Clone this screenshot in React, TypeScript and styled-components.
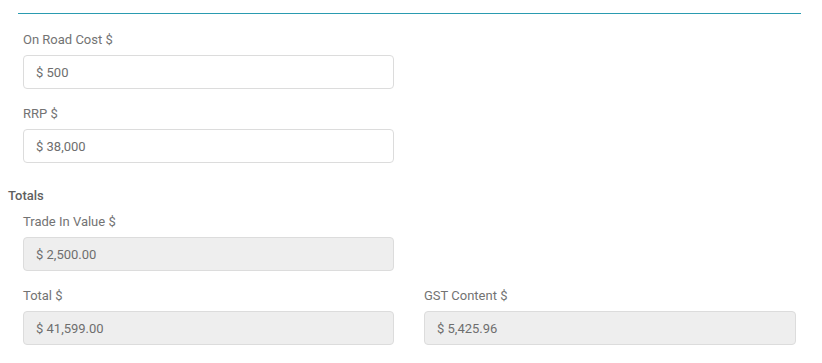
import React from "react";
import styled, { createGlobalStyle } from "styled-components";

const GlobalStyle = createGlobalStyle`
  body {
    margin: 0;
    background: #ffffff;
    font-family: Roboto, "Liberation Sans", Arial, sans-serif;
  }
`;

const Page = styled.div`
  width: 822px;
  padding: 13px 0 0 8px;
  box-sizing: border-box;
`;

const Rule = styled.div`
  height: 1px;
  width: 783px;
  margin-left: 10px;
  background-color: #2a9bb0;
`;

const Section = styled.div<{ $top: number }>`
  padding-left: 15px;
  margin-top: ${(p) => p.$top}px;
`;

const Grid = styled.div`
  display: grid;
  grid-template-columns: 371px 372px;
  column-gap: 30px;
  row-gap: 16px;
`;

const Field = styled.div`
  display: flex;
  flex-direction: column;
`;

const Label = styled.label`
  font-size: 13px;
  line-height: 18px;
  color: #737373;
  margin-bottom: 6px;
`;

const Input = styled.div<{ $readOnly?: boolean }>`
  height: 34px;
  box-sizing: border-box;
  border: 1px solid #dcdcdc;
  border-radius: 4px;
  background-color: ${(p) => (p.$readOnly ? "#eeeeee" : "#ffffff")};
  padding: 0 12px;
  display: flex;
  align-items: center;
  font-size: 13px;
  color: #6e6e6e;
`;

const Heading = styled.div`
  margin-top: 24px;
  font-size: 13px;
  line-height: 18px;
  font-weight: 500;
  color: #5f5f5f;
`;

type F = { label: string; value: string; readOnly?: boolean } | null;

const top: F[] = [
  { label: "On Road Cost $", value: "$ 500" },
  null,
  { label: "RRP $", value: "$ 38,000" },
  null,
];

const totals: F[] = [
  { label: "Trade In Value $", value: "$ 2,500.00", readOnly: true },
  null,
  { label: "Total $", value: "$ 41,599.00", readOnly: true },
  { label: "GST Content $", value: "$ 5,425.96", readOnly: true },
];

const renderFields = (list: F[]) =>
  list.map((f, i) =>
    f ? (
      <Field key={i}>
        <Label>{f.label}</Label>
        <Input $readOnly={f.readOnly}>{f.value}</Input>
      </Field>
    ) : (
      <div key={i} />
    )
  );

const App = () => {
  return (
    <Page>
      <GlobalStyle />
      <Rule />
      <Section $top={17}>
        <Grid>{renderFields(top)}</Grid>
      </Section>
      <Heading>Totals</Heading>
      <Section $top={8}>
        <Grid>{renderFields(totals)}</Grid>
      </Section>
    </Page>
  );
};

export default App;
